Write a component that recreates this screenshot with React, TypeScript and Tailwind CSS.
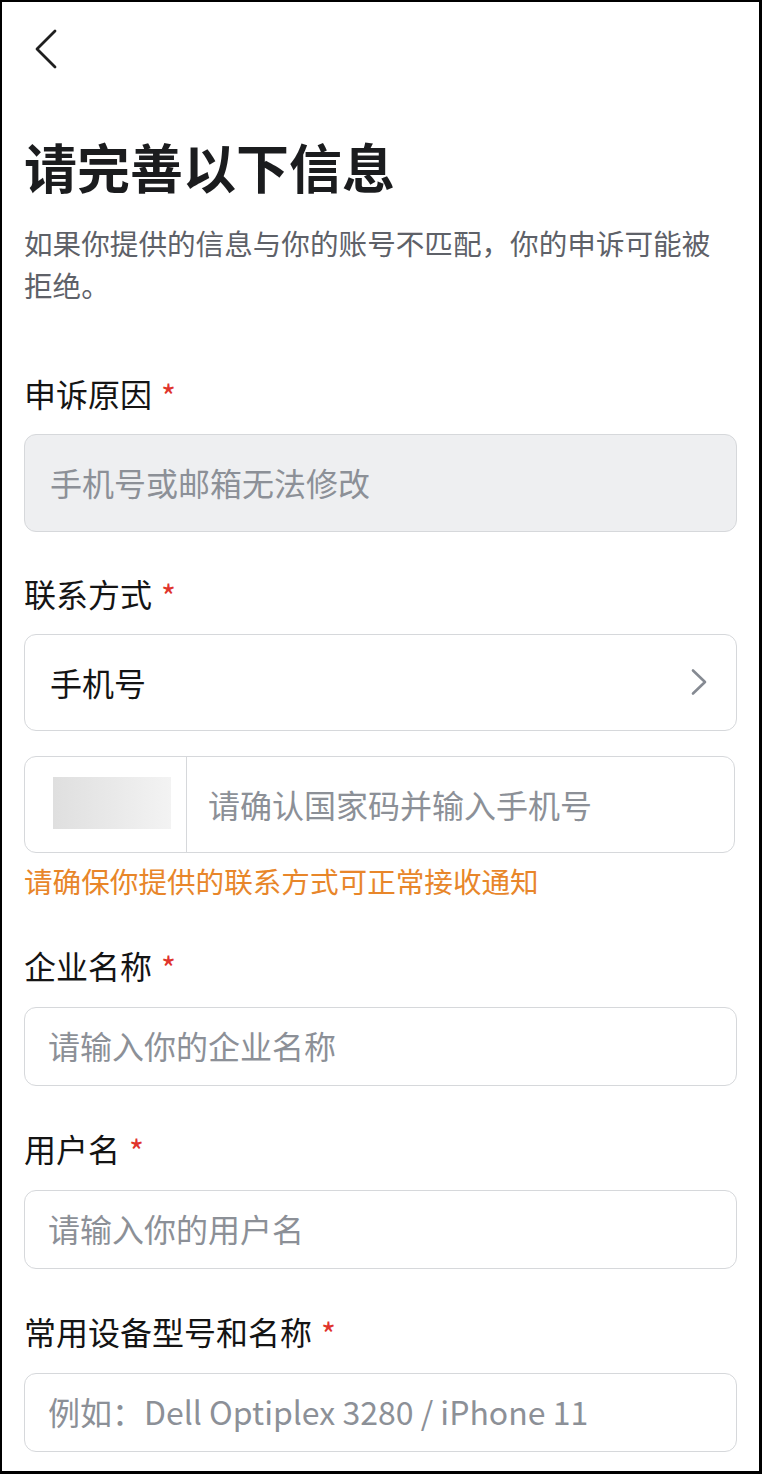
import type { ReactNode } from 'react'

const FONT = "font-['Noto_Sans_CJK_SC','Noto_Sans',sans-serif]"

const Label = ({ children }: { children: ReactNode }) => (
  <div className="flex items-center h-[44px] text-[32px] leading-[44px] text-[#141414]">
    <span>{children}</span>
    <span className="ml-[9px] text-[32px] leading-none text-[#e0342c] translate-y-[2px]">*</span>
  </div>
)

const TextBox = ({ placeholder }: { placeholder: string }) => (
  <div className="mt-[20px] h-[79px] rounded-[12px] border border-[#d6d8db] bg-white flex items-center pl-[23px] pb-[4px]">
    <input
      placeholder={placeholder}
      className="w-full bg-transparent outline-none text-[32px] text-[#141414] placeholder:text-[#8c9097]"
    />
  </div>
)

const ChevronRight = () => (
  <svg width="18" height="28" viewBox="0 0 18 28" fill="none">
    <path d="M3 2.5 L15 14 L3 25.5" stroke="#858a92" strokeWidth="2.6" strokeLinecap="round" strokeLinejoin="round" />
  </svg>
)

const ChevronLeft = () => (
  <svg width="26" height="42" viewBox="0 0 26 42" fill="none">
    <path d="M22 3 L4 21 L22 39" stroke="#1f1f1f" strokeWidth="2.8" strokeLinecap="round" strokeLinejoin="round" />
  </svg>
)

export default function App() {
  return (
    <div className={`w-[762px] h-[1474px] overflow-hidden bg-white border-black border-l-2 border-t-2 border-r-[3px] border-b-[3px] ${FONT}`}>
      {/* Header */}
      <div className="h-[94px] flex items-center pl-[31px]">
        <ChevronLeft />
      </div>

      <div className="px-[22px]">
        <h1 className="mt-[40px] text-[53px] leading-[60px] font-bold text-[#1b1c1e]">请完善以下信息</h1>
        <p className="mt-[26px] max-w-[700px] text-[28.6px] leading-[42px] text-[#5e6168]">
          如果你提供的信息与你的账号不匹配，你的申诉可能被拒绝。
        </p>

        {/* 申诉原因 */}
        <div className="mt-[65px]">
          <Label>申诉原因</Label>
          <div className="mt-[19px] h-[98px] rounded-[12px] border border-[#d6d8db] bg-[#eeeff1] flex items-center pl-[25px] pb-[2px] text-[32px] text-[#8c9097]">
            手机号或邮箱无法修改
          </div>
        </div>

        {/* 联系方式 */}
        <div className="mt-[39px]">
          <Label>联系方式</Label>
          <div className="mt-[19px] h-[97px] rounded-[12px] border border-[#d6d8db] bg-white flex items-center justify-between pl-[25px] pr-[28px] pb-[2px] text-[32px] text-[#141414]">
            <span>手机号</span>
            <ChevronRight />
          </div>
          <div className="mt-[25px] mr-[2px] h-[97px] rounded-[12px] border border-[#d6d8db] bg-white flex items-stretch">
            <div className="w-[162px] shrink-0 border-r border-[#d6d8db] flex items-center pl-[28px]">
              <div className="w-[118px] h-[52px] -translate-y-[2px] bg-gradient-to-r from-[#dfdfdf] to-[#f3f3f3]" />
            </div>
            <div className="flex-1 flex items-center pl-[21px] pb-[2px]">
              <input
                placeholder="请确认国家码并输入手机号"
                className="w-full bg-transparent outline-none text-[32px] text-[#141414] placeholder:text-[#8c9097]"
              />
            </div>
          </div>
          <p className="mt-[7px] text-[28.6px] leading-[42px] text-[#e8862a]">请确保你提供的联系方式可正常接收通知</p>
        </div>

        {/* 企业名称 */}
        <div className="mt-[41px]">
          <Label>企业名称</Label>
          <TextBox placeholder="请输入你的企业名称" />
        </div>

        {/* 用户名 */}
        <div className="mt-[40px]">
          <Label>用户名</Label>
          <TextBox placeholder="请输入你的用户名" />
        </div>

        {/* 常用设备 */}
        <div className="mt-[40px]">
          <Label>常用设备型号和名称</Label>
          <TextBox placeholder="例如：Dell Optiplex 3280 / iPhone 11" />
        </div>
      </div>
    </div>
  )
}
